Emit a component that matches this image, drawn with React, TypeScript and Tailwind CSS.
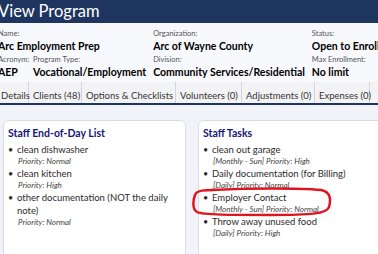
import React from "react";

const left = [
  { t: "clean dishwasher", p: "Priority: Normal" },
  { t: "clean kitchen", p: "Priority: High" },
  { t: "other documentation (NOT the daily note)", p: "Priority: Normal" },
];

const right = [
  { t: "clean out garage", p: "[Monthly - Sun] Priority: High" },
  { t: "Daily documentation (for Billing)", p: "[Daily] Priority: Normal" },
  { t: "Employer Contact", p: "[Monthly - Sun] Priority: Normal" },
  { t: "Throw away unused food", p: "[Daily] Priority: High" },
];

const tabs = [
  { t: "Details", w: "w-[32px]" },
  { t: "Clients (48)", w: "w-[53px]" },
  { t: "Options & Checklists", w: "w-[94px]" },
  { t: "Volunteers (0)", w: "w-[66px]" },
  { t: "Adjustments (0)", w: "w-[73px]" },
  { t: "Expenses (0)", w: "w-[55px]" },
];

function Field({ label, value, className = "" }: { label: string; value: string; className?: string }) {
  return (
    <div className={`flex flex-col ${className}`}>
      <span className="text-[7.5px] leading-[11px] text-[#555] whitespace-nowrap">{label}</span>
      <span className="text-[10.5px] leading-[14px] font-bold text-black whitespace-nowrap">{value}</span>
    </div>
  );
}

function TaskList({ items }: { items: { t: string; p: string }[] }) {
  return (
    <ul className="flex flex-col">
      {items.map((it) => (
        <li key={it.t} className="flex">
          <span className="w-[9px] shrink-0 text-[9px] leading-[13px] text-[#2a2a2a]">•</span>
          <div className="flex flex-col">
            <span className="text-[9.5px] leading-[13px] text-[#2a2a2a]">{it.t}</span>
            <span className="text-[8px] leading-[11px] italic text-[#444] pl-[1px] whitespace-nowrap">{it.p}</span>
          </div>
        </li>
      ))}
    </ul>
  );
}

export default function App() {
  return (
    <div
      className="relative w-[378px] h-[254px] overflow-hidden bg-[#f2f3f8]"
      style={{ fontFamily: 'Lato, "Noto Sans", sans-serif' }}
    >
      <div className="h-[23px] bg-[#1e365f] text-white text-[16.5px] leading-[23px] -ml-[2px]">View Program</div>

      <div className="h-[59px] bg-[#f8f9fd] flex pt-[5px]">
        <div className="w-[153px] -ml-[2px] flex flex-col gap-[1px]">
          <Field label="Name:" value="Arc Employment Prep" />
          <div className="flex">
            <Field label="Acronym:" value="AEP" className="w-[35px]" />
            <Field label="Program Type:" value="Vocational/Employment" />
          </div>
        </div>
        <div className="w-px bg-[#d6d8de] my-[1px]" />
        <div className="w-[162px] pl-[7px] flex flex-col gap-[1px]">
          <Field label="Organization:" value="Arc of Wayne County" />
          <Field label="Division:" value="Community Services/Residential" />
        </div>
        <div className="w-px bg-[#d6d8de] my-[1px]" />
        <div className="pl-[7px] flex flex-col gap-[1px]">
          <Field label="Status:" value="Open to Enrollment" />
          <Field label="Max Enrollment:" value="No limit" />
        </div>
      </div>

      <div className="flex h-[23px] bg-[#f3f3f5] border-b-2 border-[#1e365f] -ml-[3px]">
        {tabs.map((t) => (
          <div
            key={t.t}
            className={`${t.w} shrink-0 px-[4px] border-r border-[#d4d4d8] text-[9.5px] leading-[23px] text-[#333] whitespace-nowrap pt-[2px]`}
          >
            {t.t}
          </div>
        ))}
      </div>

      <div className="flex gap-[12px] pt-[15px] pl-[3px]">
        <div className="w-[183px] shrink-0 h-[160px] bg-white border border-[#dcdde3] rounded-[6px] px-[4px] pt-[3px]">
          <h2 className="text-[10.5px] leading-[18px] font-bold text-[#15157a] mb-[1px]">Staff End-of-Day List</h2>
          <TaskList items={left} />
        </div>
        <div className="w-[200px] shrink-0 h-[160px] bg-white border border-[#dcdde3] rounded-[6px] px-[4px] pt-[3px]">
          <h2 className="text-[10.5px] leading-[18px] font-bold text-[#15157a] mb-[1px]">Staff Tasks</h2>
          <TaskList items={right} />
        </div>
      </div>

      <svg className="absolute left-[191px] top-[187px]" width="142" height="30" viewBox="0 0 142 30">
        <path
          d="M20 3 C60 1 108 1 130 3 C140 5 140 13 138 20 C136 27 118 28 80 28 C40 28 12 28 6 25 C1 22 2 13 4 8 C6 3 14 3 24 3"
          fill="none"
          stroke="#e0141e"
          strokeWidth="2.5"
        />
      </svg>
    </div>
  );
}
